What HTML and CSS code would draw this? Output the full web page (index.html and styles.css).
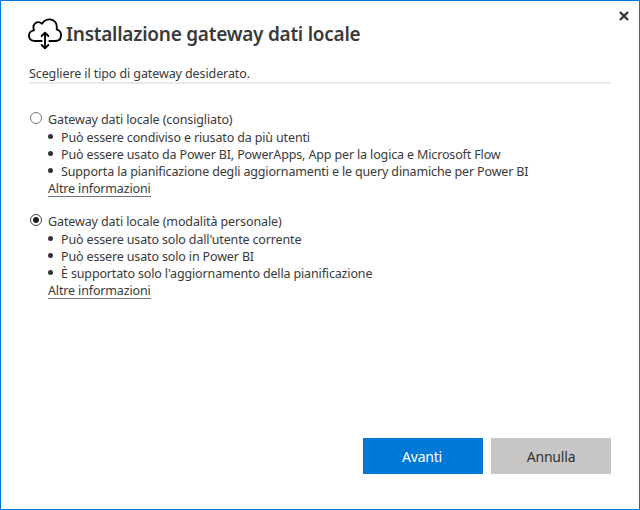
FILE: index.html
```html
<!DOCTYPE html>
<html lang="it">
<head>
<meta charset="utf-8">
<title>Installazione gateway dati locale</title>
<link rel="stylesheet" href="styles.css">
</head>
<body>
<main class="dialog">
  <button class="close" aria-label="Chiudi"><svg width="10" height="10" viewBox="0 0 10 10"><path d="M1 1L9 9M9 1L1 9"/></svg></button>
  <header class="header">
    <svg class="cloud" width="34" height="32" viewBox="24 28 102 96">
      <path d="M65 97H44C22 96 21 67 42 65C35 45 52 34 66 45C79 24 114 28 110 62C129 68 127 96 106 97H88"/>
      <path d="M75 73V117M65 82L75 72L85 82M65 109L75 119L85 109"/>
    </svg>
    <h1>Installazione gateway dati locale</h1>
  </header>
  <p class="intro">Scegliere il tipo di gateway desiderato.</p>
  <section class="option">
    <span class="radio"></span>
    <div class="details">
      <h2>Gateway dati locale (consigliato)</h2>
      <ul>
        <li>Può essere condiviso e riusato da più utenti</li>
        <li>Può essere usato da Power BI, PowerApps, App per la logica e Microsoft Flow</li>
        <li>Supporta la pianificazione degli aggiornamenti e le query dinamiche per Power BI</li>
      </ul>
      <a class="more">Altre informazioni</a>
    </div>
  </section>
  <section class="option">
    <span class="radio checked"></span>
    <div class="details">
      <h2>Gateway dati locale (modalità personale)</h2>
      <ul>
        <li>Può essere usato solo dall'utente corrente</li>
        <li>Può essere usato solo in Power BI</li>
        <li>È supportato solo l'aggiornamento della pianificazione</li>
      </ul>
      <a class="more">Altre informazioni</a>
    </div>
  </section>
  <footer class="actions">
    <button class="primary">Avanti</button>
    <button>Annulla</button>
  </footer>
</main>
</body>
</html>
```
FILE: styles.css
```css
* { box-sizing: border-box; }
body { margin: 0; background: #fff; }
.dialog {
  position: relative;
  display: flex;
  flex-direction: column;
  width: 640px;
  height: 510px;
  padding: 17px 28px 35px;
  border: 1px solid #0078d7;
  color: #3a3a3a;
  font: 12.5px/17px "Noto Sans", "Open Sans", sans-serif;
  letter-spacing: -0.145px;
}
.close {
  position: absolute;
  top: 10px;
  right: 10px;
  width: 10px;
  height: 10px;
  padding: 0;
  border: 0;
  background: none;
}
.close svg { display: block; fill: none; stroke: #333; stroke-width: 2.3; }
.header { display: flex; gap: 4px; height: 32px; }
.cloud { flex: none; margin-left: -1px; fill: none; stroke: #000; stroke-width: 5.5; stroke-linecap: round; stroke-linejoin: round; }
h1 { margin: 0; font-size: 19px; line-height: 33px; font-weight: 600; white-space: nowrap; letter-spacing: -0.25px; }
.intro { height: 17px; margin: 15px 0 27px; border-bottom: 2px solid #eaeaea; white-space: nowrap; box-sizing: content-box; letter-spacing: -0.1px; }
.option { display: flex; gap: 6px; height: 102px; }
.radio { flex: none; width: 12px; height: 12px; margin: 1px 0 0 1px; border: 1px solid #777; border-radius: 50%; }
.checked { border-color: #444; background: radial-gradient(circle, #222 2.6px, transparent 3.4px); }
.details { white-space: nowrap; }
h2 { margin: 0; font: inherit; line-height: 18px; letter-spacing: -0.11px; }
ul { margin: 0; padding: 0; list-style: none; }
li { display: flex; align-items: center; gap: 8px; height: 17px; }
li::before { content: ""; width: 5px; height: 5px; border-radius: 50%; background: #333; margin-top: -2px; }
.more { display: inline-block; height: 17px; border-bottom: 1px solid #777; }
.actions { display: flex; justify-content: flex-end; gap: 8px; margin-top: auto; }
.actions button { width: 120px; height: 36px; padding: 1px 0 0; border: 0; background: #c8c6c4; color: #333; font: 14px "Noto Sans", sans-serif; letter-spacing: -0.2px; }
.actions .primary { padding-right: 2px; background: #0078d7; color: #fff; }
```
